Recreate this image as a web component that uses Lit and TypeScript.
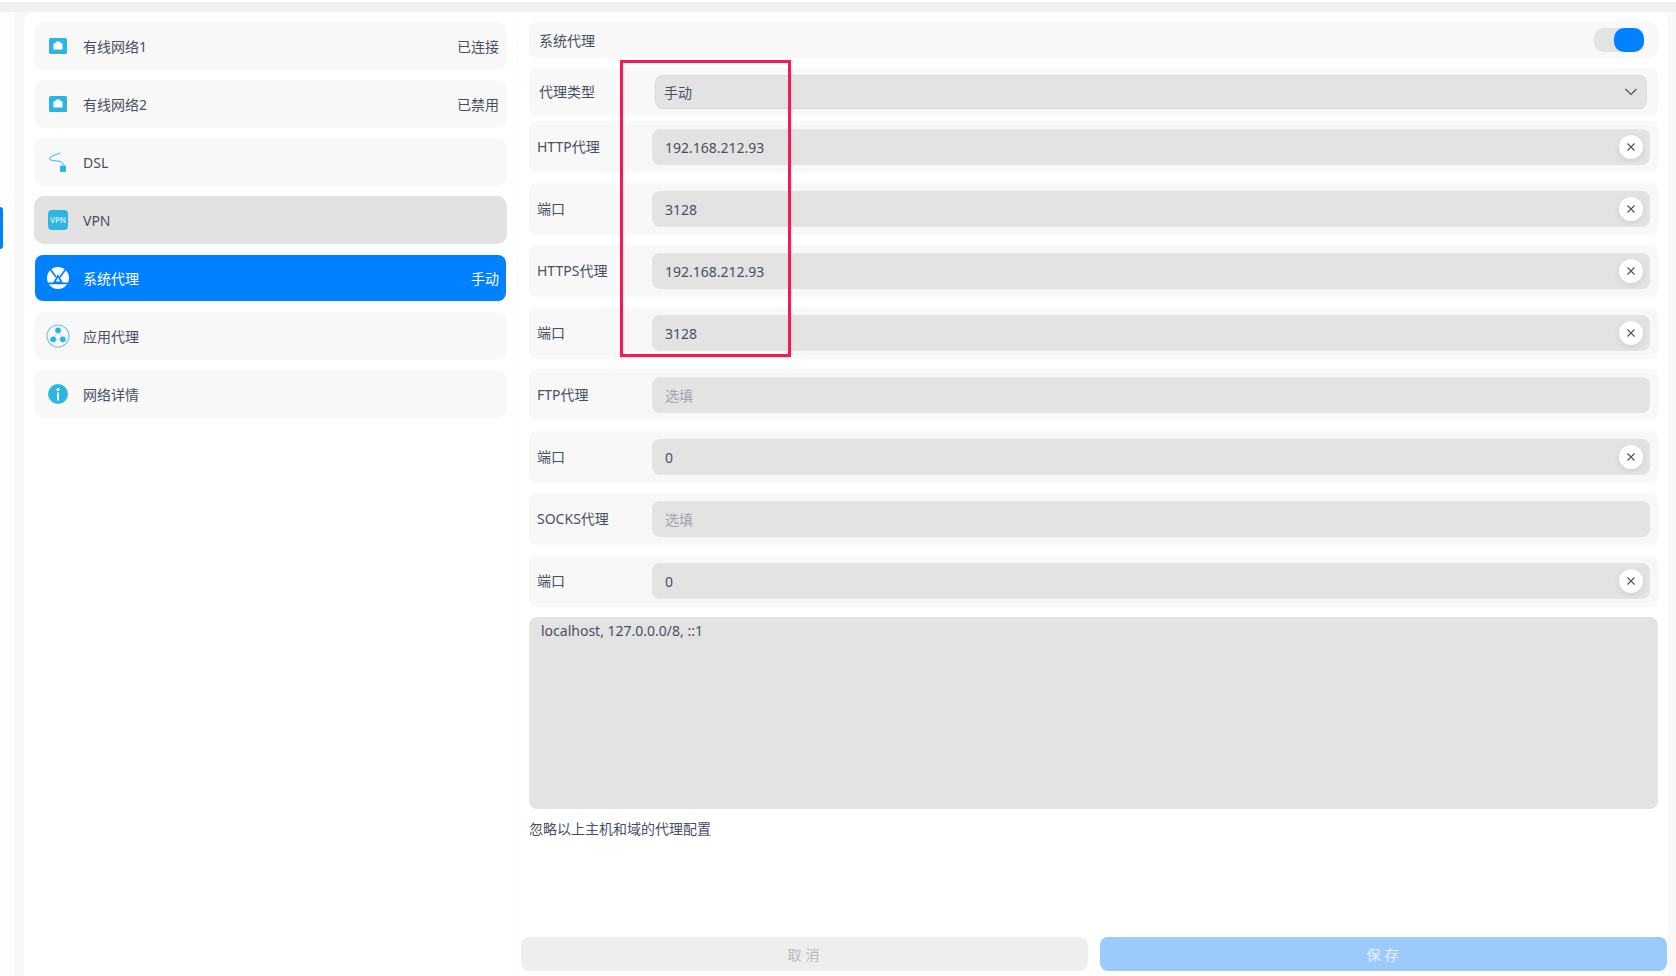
import { LitElement, html, css, svg } from "lit";
import { customElement } from "lit/decorators.js";

const ICON = "#2bb5e0";

const icons: Record<string, unknown> = {
  wired: html`<svg width="24" height="24" viewBox="0 0 24 24">
    <rect x="3" y="4" width="18" height="16" rx="1.5" fill="${ICON}"></rect>
    <path d="M7.500 9.500h1.600V8.600h1.200V7.400h3.400v1.200h1.200v.9h1.600v6H7.500z" fill="#fff"></path>
  </svg>`,
  dsl: html`<svg width="24" height="24" viewBox="0 0 24 24">
    <path d="M14.500 3C10.500 4.200 3 6.600 3.500 9c.5 2 9 1.400 12 3 1.300.6 1.700 1.500 1.700 3" fill="none" stroke="${ICON}" stroke-width="1"></path>
    <rect x="14" y="15.500" width="6" height="6.500" rx=".8" fill="${ICON}"></rect>
  </svg>`,
  vpn: html`<div class="vpn">VPN</div>`,
  system: html`<svg width="24" height="24" viewBox="0 0 24 24">
    <circle cx="12" cy="12" r="11" fill="#fff"></circle>
    <path d="M4.500 3.500L10 11M19.500 3.500L14 11M0 17.300h24" stroke="#0081ff" stroke-width="1.700" fill="none"></path>
    <path d="M12 8L6.800 17.300h10.400z" fill="#0081ff"></path>
    <path d="M12 11.800l2.200 3.800H9.800z" fill="#fff"></path>
    <circle cx="12" cy="4.800" r="3.600" fill="#fff"></circle>
  </svg>`,
  app: html`<svg width="24" height="24" viewBox="0 0 24 24">
    <circle cx="12" cy="12" r="11" fill="none" stroke="#6cc9e7" stroke-width="1.100"></circle>
    <path d="M12 6.300L7.200 15.300h9.600z" fill="none" stroke="#9ddcf0" stroke-width=".7"></path>
    <circle cx="12" cy="6.300" r="2.900" fill="${ICON}"></circle>
    <circle cx="7.200" cy="15.300" r="2.900" fill="${ICON}"></circle>
    <circle cx="16.800" cy="15.300" r="2.900" fill="${ICON}"></circle>
  </svg>`,
  info: html`<svg width="24" height="24" viewBox="0 0 24 24">
    <circle cx="12" cy="12" r="10" fill="${ICON}"></circle>
    <circle cx="12" cy="7.600" r="1.500" fill="#fff"></circle>
    <rect x="11" y="10.500" width="2" height="8" rx=".5" fill="#fff"></rect>
  </svg>`,
};

const navItems = [
  { icon: "wired", label: "有线网络1", status: "已连接" },
  { icon: "wired", label: "有线网络2", status: "已禁用" },
  { icon: "dsl", label: "DSL", status: "" },
  { icon: "vpn", label: "VPN", status: "", state: "hover" },
  { icon: "system", label: "系统代理", status: "手动", state: "active" },
  { icon: "app", label: "应用代理", status: "" },
  { icon: "info", label: "网络详情", status: "" },
];

const fields = [
  { label: "HTTP代理", value: "192.168.212.93", clear: true },
  { label: "端口", value: "3128", clear: true },
  { label: "HTTPS代理", value: "192.168.212.93", clear: true },
  { label: "端口", value: "3128", clear: true },
  { label: "FTP代理", value: "", clear: false },
  { label: "端口", value: "0", clear: true },
  { label: "SOCKS代理", value: "", clear: false },
  { label: "端口", value: "0", clear: true },
];

@customElement("app-root")
export class AppRoot extends LitElement {
  static styles = css`
    :host {
      display: block;
      position: relative;
      width: 1676px;
      height: 976px;
      overflow: hidden;
      background: #fff;
      color: #484f63;
      font: 14px/20px "Noto Sans", "Noto Sans CJK SC", sans-serif;
    }
    .topbar { height: 10px; margin-top: 2px; background: #f1f1f1; }
    .main { display: flex; height: 964px; }
    .rail { width: 14px; background: #fdfdfd; padding-top: 195px; box-sizing: border-box; }
    .indicator { width: 3px; height: 42px; background: #0081ff; border-radius: 0 4px 4px 0; }
    .shell { flex: 1; display: flex; gap: 1px; background: #f8f8f8; padding: 0 8px 0 10px; }
    .nav {
      width: 493px; box-sizing: border-box; background: #fff; padding: 10px;
      border-radius: 10px 0 0 0; display: flex; flex-direction: column; gap: 10px;
    }
    .item {
      height: 48px; box-sizing: border-box; display: flex; align-items: center;
      background: #f8f8f8; border-radius: 10px; padding: 0 8px 0 12px;
    }
    .item.hover { background: #e2e2e2; }
    .item.active {
      background: #0081ff; color: #fff; margin: 1px; height: 46px;
      padding: 0 7px 0 11px; border-radius: 8px;
    }
    .icon { width: 24px; height: 24px; flex: none; margin-right: 13px; display: flex; align-items: center; justify-content: center; }
    .icon svg { display: block; }
    .vpn {
      width: 20px; height: 20px; border-radius: 4px; background: #2bb5e0;
      color: #cfeef8; font-size: 8px; line-height: 20px; font-weight: 600; text-align: center;
      letter-spacing: -0.1px;
    }
    .grow { flex: 1; }
    .lower { padding-top: 2px; }
    .content { flex: 1; background: #fff; border-radius: 0 10px 0 0; display: flex; flex-direction: column; }
    .form { padding: 10px 10px 0 11px; display: flex; flex-direction: column; }
    .row {
      display: flex; align-items: center; background: #f8f8f8; border-radius: 8px;
      height: 52px; box-sizing: border-box; padding: 0 8px; margin-bottom: 10px;
    }
    .row.switch { height: 36px; padding: 0 14px 0 10px; justify-content: space-between; }
    .row.type { height: 48px; padding: 0 11px 0 10px; margin-bottom: 5px; }
    .label { width: 115px; flex: none; }
    .type .label { width: 116px; }
    .toggle { width: 50px; height: 24px; border-radius: 10px; background: #e3e3e3; display: flex; justify-content: flex-end; }
    .knob { width: 30px; height: 24px; border-radius: 10px; background: #0081ff; }
    .select {
      flex: 1; height: 34px; box-sizing: border-box; background: #e3e3e3; border: 1px solid #dadada;
      border-bottom-color: #d4d4d4; border-radius: 8px; padding: 0 8px; display: flex; align-items: center; justify-content: space-between;
    }
    .select svg { display: block; }
    .field {
      flex: 1; height: 36px; background: #e3e3e3; border-radius: 8px; display: flex; align-items: center;
      padding: 0 7px 0 13px;
    }
    input, textarea {
      background: transparent; border: 0; outline: 0; padding: 0; margin: 0; color: inherit;
      font: inherit;
    }
    input { flex: 1; height: 36px; min-width: 0; }
    input::placeholder { color: #a0a4ae; opacity: 1; }
    .clear {
      width: 24px; height: 24px; border-radius: 50%; background: #fff; box-shadow: 0 2px 6px rgba(0,0,0,.09);
      display: flex; align-items: center; justify-content: center;
    }
    textarea {
      display: block; width: 100%; height: 192px; box-sizing: border-box; background: #e3e3e3; border-radius: 8px;
      padding: 4px 12px; resize: none;
    }
    .note { margin: 10px 0 0 0; }
    .footer { margin-top: auto; display: flex; gap: 12px; padding: 0 1px 5px 3px; }
    .btn {
      flex: 1; height: 34px; box-sizing: border-box; padding: 2px 0 0 2px; border-radius: 8px; display: flex; align-items: center; justify-content: center;
      letter-spacing: 4px;
    }
    .cancel { background: #eeeeee; color: #b8b9be; }
    .save { background: #9ccbfb; color: #e6f2fe; }
    .mark {
      position: absolute; left: 620px; top: 60px; width: 171px; height: 297px; box-sizing: border-box;
      border: 3px solid #f81a4f; pointer-events: none;
    }
  `;

  render() {
    return html`
      <div class="topbar"></div>
      <div class="main">
        <div class="rail"><div class="indicator"></div></div>
        <div class="shell">
          <nav class="nav">
            ${navItems.map(
              (n) => html`<div class="item ${n.state ?? ""}">
                <span class="icon">${icons[n.icon]}</span>
                <span class="grow lower">${n.label}</span>
                <span class="lower">${n.status}</span>
              </div>`
            )}
          </nav>
          <section class="content">
            <div class="form">
              <div class="row switch">
                <span class="lower">系统代理</span>
                <div class="toggle"><div class="knob"></div></div>
              </div>
              <div class="row type">
                <span class="label">代理类型</span>
                <div class="select">
                  <span class="lower">手动</span>
                  <svg width="14" height="14" viewBox="0 0 14 14"><path d="M1.500 4l5.500 5.500L12.500 4" fill="none" stroke="#484f63" stroke-width="1.200"></path></svg>
                </div>
              </div>
              ${fields.map(
                (f) => html`<div class="row">
                  <span class="label">${f.label}</span>
                  <div class="field">
                    <input .value=${f.value} placeholder="选填" />
                    ${f.clear
                      ? html`<div class="clear">
                          <svg width="10" height="10" viewBox="0 0 10 10">${svg`<path d="M1.500 1.500l7 7M8.500 1.500l-7 7" stroke="#484f63" stroke-width="1.100"></path>`}</svg>
                        </div>`
                      : ""}
                  </div>
                </div>`
              )}
              <textarea .value=${"localhost, 127.0.0.0/8, ::1"}></textarea>
              <div class="note">忽略以上主机和域的代理配置</div>
            </div>
            <div class="footer">
              <div class="btn cancel">取消</div>
              <div class="btn save">保存</div>
            </div>
          </section>
        </div>
      </div>
      <div class="mark"></div>
    `;
  }
}
